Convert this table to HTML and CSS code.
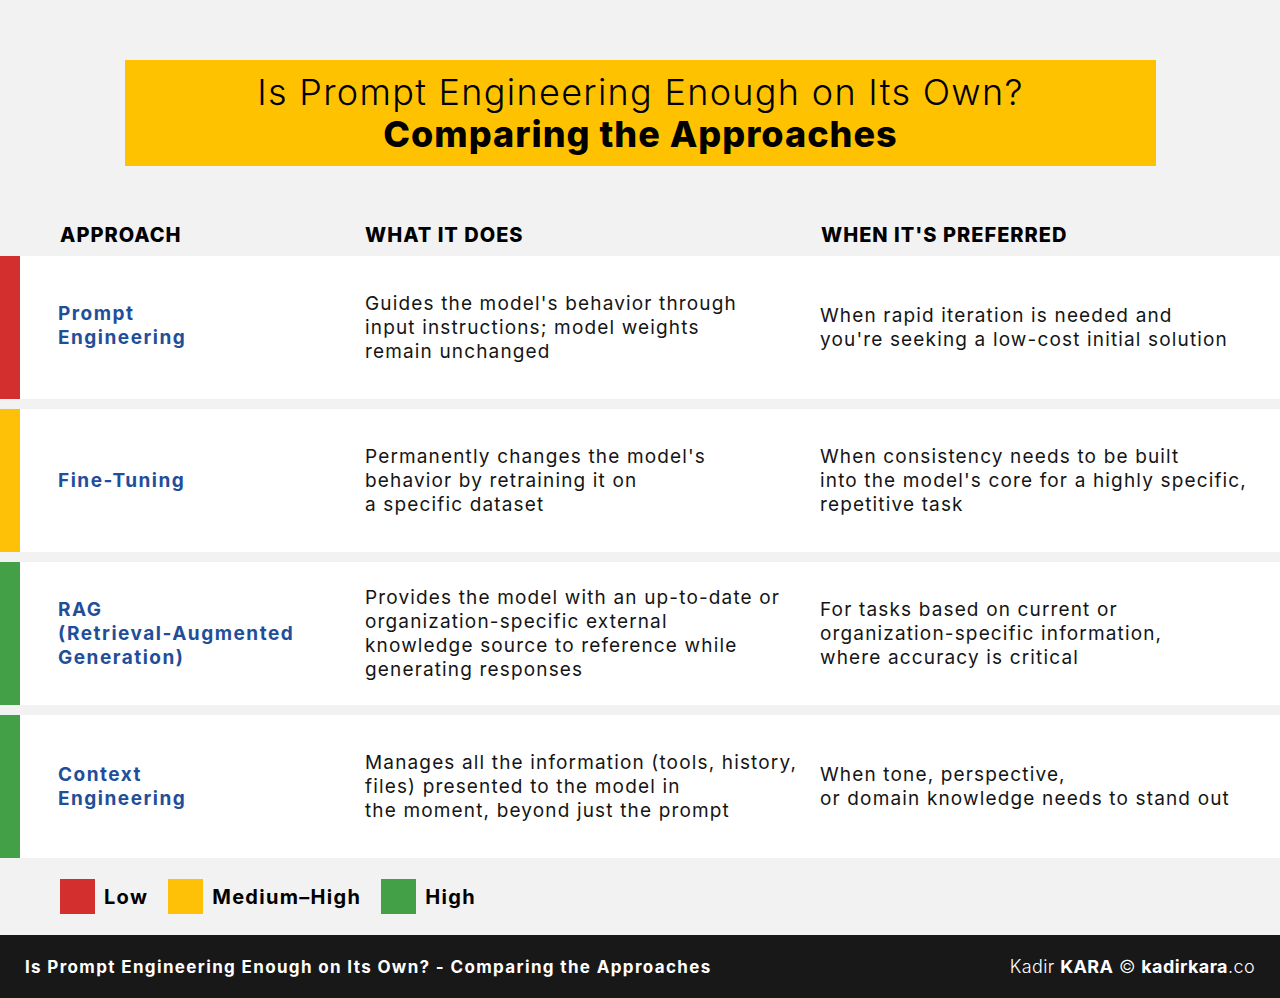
FILE: index.html
```html
<!DOCTYPE html>
<html lang="en">
<head>
<meta charset="utf-8">
<title>Is Prompt Engineering Enough on Its Own?</title>
<link rel="stylesheet" href="styles.css">
</head>
<body>
<div class="page">
  <header class="banner">
    <div class="banner-line1">Is Prompt Engineering Enough on Its Own?</div>
    <div class="banner-line2">Comparing the Approaches</div>
  </header>

  <div class="thead">
    <div class="th th-approach">APPROACH</div>
    <div class="th th-does">WHAT IT DOES</div>
    <div class="th th-when">WHEN IT'S PREFERRED</div>
  </div>

  <div class="rows">
    <div class="row">
      <div class="bar bar-red"></div>
      <div class="cell cell-approach cell-approach-up">Prompt<br>Engineering</div>
      <div class="cell cell-does">Guides the model's behavior through<br>input instructions; model weights<br>remain unchanged</div>
      <div class="cell cell-when">When rapid iteration is needed and<br>you're seeking a low-cost initial solution</div>
    </div>
    <div class="row">
      <div class="bar bar-yellow"></div>
      <div class="cell cell-approach">Fine-Tuning</div>
      <div class="cell cell-does">Permanently changes the model's<br>behavior by retraining it on<br>a specific dataset</div>
      <div class="cell cell-when">When consistency needs to be built<br>into the model's core for a highly specific,<br>repetitive task</div>
    </div>
    <div class="row">
      <div class="bar bar-green"></div>
      <div class="cell cell-approach">RAG<br>(Retrieval-Augmented<br>Generation)</div>
      <div class="cell cell-does">Provides the model with an up-to-date or<br>organization-specific external<br>knowledge source to reference while<br>generating responses</div>
      <div class="cell cell-when">For tasks based on current or<br>organization-specific information,<br>where accuracy is critical</div>
    </div>
    <div class="row">
      <div class="bar bar-green"></div>
      <div class="cell cell-approach">Context<br>Engineering</div>
      <div class="cell cell-does">Manages all the information (tools, history,<br>files) presented to the model in<br>the moment, beyond just the prompt</div>
      <div class="cell cell-when">When tone, perspective,<br>or domain knowledge needs to stand out</div>
    </div>
  </div>

  <div class="legend">
    <div class="legend-item"><span class="swatch bar-red"></span><span class="legend-label">Low</span></div>
    <div class="legend-item"><span class="swatch bar-yellow"></span><span class="legend-label">Medium–High</span></div>
    <div class="legend-item"><span class="swatch bar-green"></span><span class="legend-label">High</span></div>
  </div>

  <footer class="footer">
    <div class="footer-title">Is Prompt Engineering Enough on Its Own? - Comparing the Approaches</div>
    <div class="footer-credit">Kadir <b>KARA</b> © <b>kadirkara</b>.co</div>
  </footer>
</div>
</body>
</html>
```

FILE: styles.css
```css
* { box-sizing: border-box; }

html, body {
  margin: 0;
  padding: 0;
  background: #f2f2f2;
}

body {
  font-family: "Inter", "DejaVu Sans", sans-serif;
  color: #111;
}

.page {
  width: 1280px;
  height: 998px;
  display: flex;
  flex-direction: column;
}

.banner {
  margin: 60px 124px 0 125px;
  height: 106px;
  background: #ffc200;
  display: flex;
  flex-direction: column;
  align-items: center;
  justify-content: center;
  color: #000;
}

.banner-line1 {
  font-size: 36px;
  font-weight: 300;
  line-height: 42px;
  letter-spacing: 1.3px;
}

.banner-line2 {
  font-size: 36px;
  font-weight: 800;
  line-height: 42px;
  letter-spacing: 1px;
}

.thead {
  height: 90px;
  display: flex;
  align-items: flex-end;
  padding-bottom: 9px;
  padding-left: 60px;
}

.th {
  font-size: 20px;
  font-weight: 800;
  line-height: 24px;
  letter-spacing: 1px;
  color: #000;
}

.th-approach { width: 305px; }
.th-does { width: 456px; }

.rows {
  display: flex;
  flex-direction: column;
  gap: 10px;
}

.row {
  height: 143px;
  background: #fff;
  display: flex;
  align-items: center;
}

.bar {
  width: 20px;
  align-self: stretch;
}

.bar-red { background: #d32f2f; }
.bar-yellow { background: #ffc107; }
.bar-green { background: #43a047; }

.cell {
  font-size: 19px;
  line-height: 24px;
  letter-spacing: 1.15px;
}

.cell-approach {
  width: 345px;
  padding-left: 38px;
  font-weight: 700;
  letter-spacing: 1.5px;
  color: #1f4e9a;
}

.cell-approach-up {
  padding-bottom: 4px;
}

.cell-does {
  width: 455px;
  color: #151515;
}

.cell-when {
  flex: 1;
  color: #151515;
}

.legend {
  display: flex;
  align-items: center;
  padding-left: 60px;
  height: 77px;
}

.legend-item {
  display: flex;
  align-items: center;
  margin-right: 20px;
}

.swatch {
  width: 35px;
  height: 35px;
  display: inline-block;
  margin-right: 9px;
}

.legend-label {
  font-size: 20px;
  font-weight: 700;
  letter-spacing: 1.3px;
  color: #000;
}

.footer {
  flex: 1;
  background: #181818;
  color: #fff;
  display: flex;
  align-items: center;
  justify-content: space-between;
  padding: 0 25px;
}

.footer-title {
  font-size: 17px;
  font-weight: 700;
  letter-spacing: 1.35px;
}

.footer-credit {
  font-size: 18px;
  font-weight: 300;
  letter-spacing: 0.4px;
}

.footer-credit b { font-weight: 700; }
```
